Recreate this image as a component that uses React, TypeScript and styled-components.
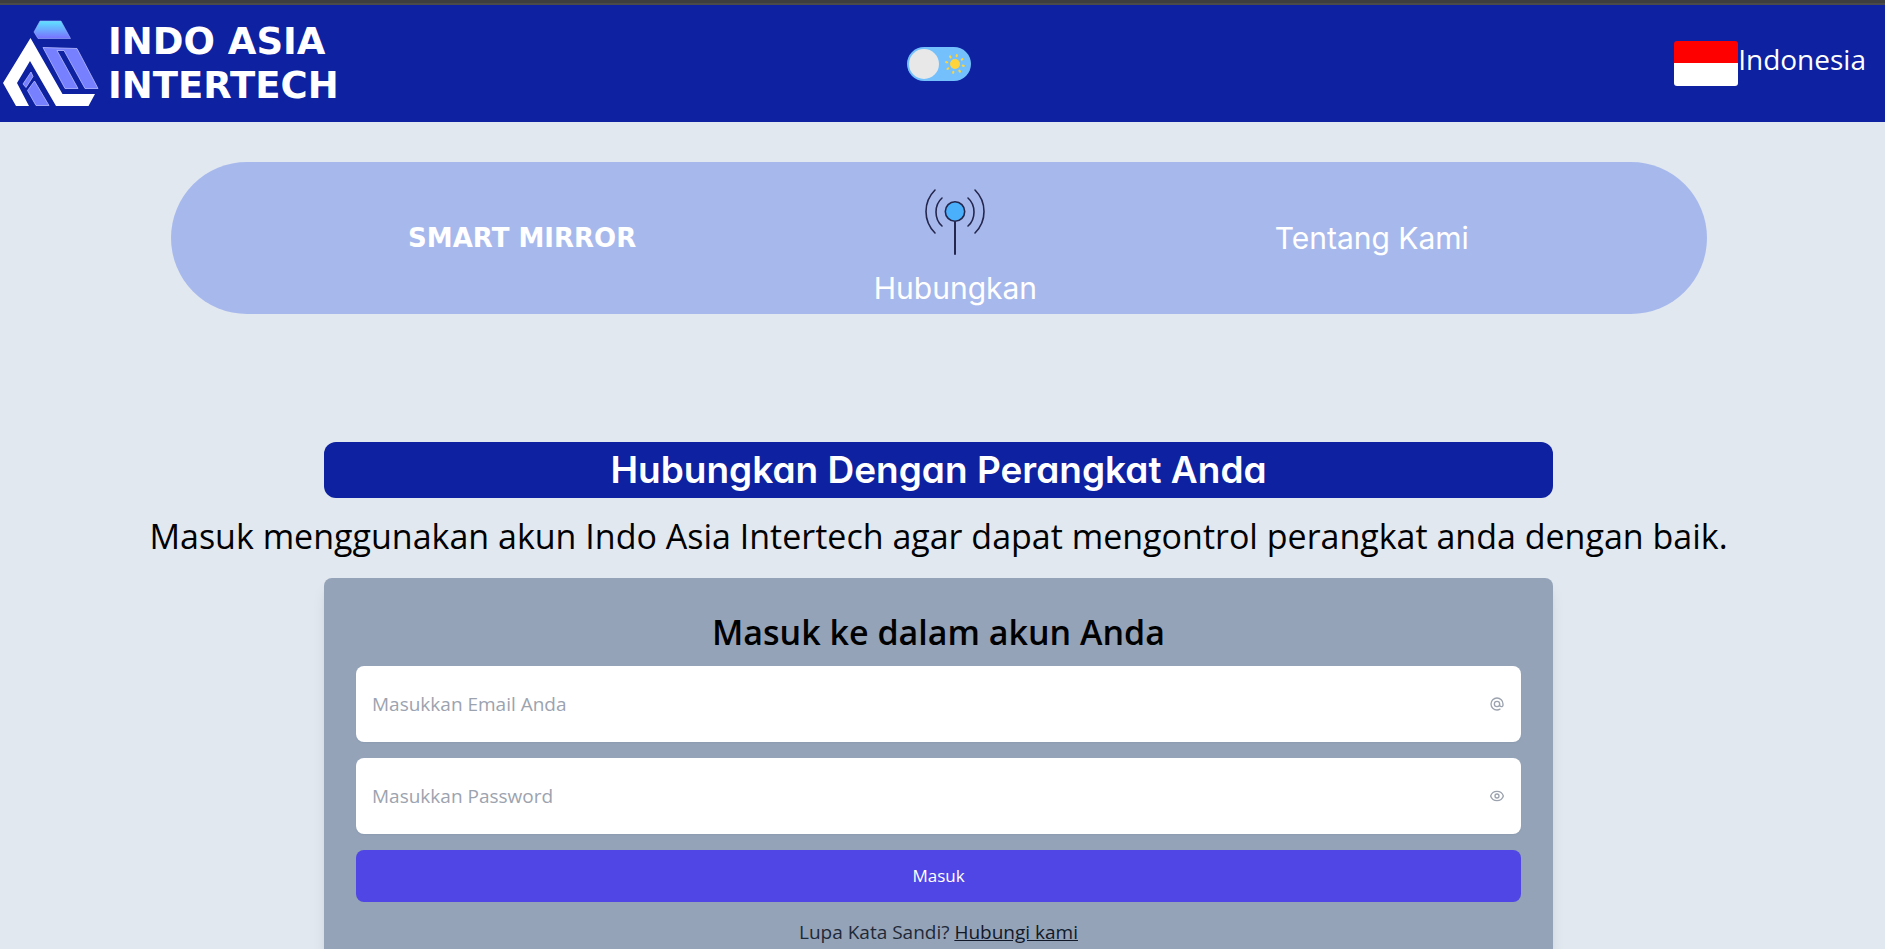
import React, { useState } from "react";
import styled, { createGlobalStyle } from "styled-components";

const ui = `"Open Sans", "Noto Sans", "Liberation Sans", sans-serif`;
const inter = `Inter, "Liberation Sans", sans-serif`;
const display = `"DejaVu Sans", "Liberation Sans", sans-serif`;
const navy = "#0d21a1";

const GlobalStyle = createGlobalStyle`
  *, *::before, *::after { box-sizing: border-box; }
  html { scrollbar-width: none; }
  body { margin: 0; background: #e2e8f0; color: #000; font-family: ${ui}; }
  h1, h2, p { margin: 0; }
`;

const Page = styled.div`
  min-height: 100vh;
  border-top: 3px solid #3e3e3e;
`;

const Header = styled.header`
  display: grid;
  grid-template-columns: 1fr auto 1fr;
  align-items: center;
  min-height: 119px;
  padding-right: 8px;
  border-top: 2px solid #4a4a4a;
  background: ${navy};
  color: #fff;
`;

const Brand = styled.a`
  display: flex;
  align-items: center;
  gap: 8px;
  color: inherit;
  text-decoration: none;
`;

const BrandName = styled.span`
  font: 700 37px/44px ${display};
`;

const Switch = styled.label`
  position: relative;
  display: flex;
  align-items: center;
  justify-content: flex-end;
  width: 64px;
  height: 34px;
  padding: 0 6px;
  border-radius: 17px;
  background: #73c0fc;
  cursor: pointer;
`;

const SwitchInput = styled.input`
  position: absolute;
  inset: 0;
  margin: 0;
  appearance: none;
  cursor: pointer;

  &::before {
    content: "";
    position: absolute;
    top: 2px;
    left: 2px;
    width: 30px;
    height: 30px;
    border-radius: 50%;
    background: #e8e8e8;
  }
  &:checked::before { left: 32px; }
`;

const Language = styled.button`
  display: flex;
  align-items: flex-start;
  justify-self: end;
  margin-right: 11px;
  padding: 0;
  border: 0;
  background: none;
  color: inherit;
  font: 400 28px/36px ${ui};
`;

const Flag = styled.span`
  width: 64px;
  height: 45px;
  border-radius: 3px;
  background: linear-gradient(#f00 50%, #fff 50%);
`;

const Main = styled.main`
  display: flex;
  flex-direction: column;
  align-items: center;
  padding: 40px 8px 40px 0;
`;

const Nav = styled.nav`
  display: flex;
  align-items: center;
  justify-content: space-evenly;
  width: 100%;
  max-width: 1536px;
  padding: 8px 0;
  border-radius: 76px;
  background: #a7b9ec;
`;

const NavLink = styled.a<{ $display?: boolean }>`
  display: flex;
  flex-direction: column;
  align-items: center;
  color: #fff;
  text-decoration: none;
  font: ${(p) => (p.$display ? `700 26px/36px ${display}` : `400 30px/36px ${inter}`)};
`;

const Title = styled.h1`
  width: 80%;
  max-width: 1229px;
  margin-top: 128px;
  border-radius: 12px;
  background: ${navy};
  color: #fff;
  font: 600 37px/56px ${inter};
  font-feature-settings: "cv11";
  text-align: center;
`;

const Lead = styled.p`
  margin: 16px 0 20px;
  font-size: 34px;
  line-height: 44px;
  text-align: center;
`;

const Card = styled.form`
  display: flex;
  flex-direction: column;
  gap: 16px;
  width: 80%;
  max-width: 1229px;
  padding: 32px;
  border-radius: 8px;
  background: #94a3b8;
  box-shadow: 0 10px 15px -3px rgba(0, 0, 0, 0.1), 0 4px 6px -4px rgba(0, 0, 0, 0.1);
`;

const CardTitle = styled.h2`
  margin-bottom: -4px;
  font-size: 34px;
  font-weight: 600;
  line-height: 44px;
  text-align: center;
`;

const Field = styled.label`
  display: flex;
  align-items: center;
  height: 76px;
  padding: 0 16px;
  border-radius: 8px;
  background: #fff;
  box-shadow: 0 1px 2px rgba(0, 0, 0, 0.05);
  color: #9ca3af;
`;

const Input = styled.input`
  flex: 1;
  min-width: 0;
  padding: 0;
  border: 0;
  outline: 0;
  background: none;
  color: #374151;
  font: 400 19px/28px ${ui};
  &::placeholder { color: #9ca3af; opacity: 1; }
`;

const Submit = styled.button`
  height: 52px;
  border: 0;
  border-radius: 8px;
  background: #4f46e5;
  color: #fff;
  font: 400 17px/28px ${ui};
`;

const Help = styled.p`
  color: #1f2937;
  font-size: 19px;
  line-height: 28px;
  text-align: center;
  a { color: #111827; }
`;

const Logo = () => (
  <svg width="100" height="90" viewBox="0 19 100 90" aria-hidden="true">
    <defs>
      <linearGradient id="cap" x1="0" y1="0" x2="0" y2="1">
        <stop offset="0" stopColor="#5fe3ff" />
        <stop offset="1" stopColor="#7a70ff" />
      </linearGradient>
    </defs>
    <path d="M40 21H61L70.500 38.500H38L34 32Z" fill="url(#cap)" stroke="#9fb4ff" strokeWidth=".6" />
    <path d="M30.500 38L62.500 94H95L88.500 106H56L30 61L17 83L29 106H16L3 83Z" fill="#fff" />
    <g fill="#7780ff" stroke="#b9bdff" strokeWidth=".8">
      <path d="M43 47.500L77 48.500L98 88.500H85L64 50.500H57L78 88.500H65Z" />
      <path d="M31 72L33 76.500L26 87.500L23 84Z" />
      <path d="M34.500 81L49 105.500H36L27.500 90.500Z" />
    </g>
  </svg>
);

const Sun = () => (
  <svg width="20" height="22" viewBox="-10 -11 20 22" aria-hidden="true" fill="#ffd43b">
    <circle r="5" />
    {[12, 57, 102, 147, 192, 237, 282, 327].map((a) => (
      <ellipse key={a} cy="-8.500" rx="1.100" ry="1.600" transform={`rotate(${a})`} />
    ))}
  </svg>
);

const Antenna = () => (
  <svg width="100" height="100" viewBox="0 0 100 100" fill="none" stroke="#24264d" strokeWidth="1.600" strokeLinecap="round" aria-hidden="true">
    <path d="M50 52V84" strokeWidth="2" />
    <circle cx="50" cy="41.500" r="9.700" fill="#4bb0fb" />
    <path d="M37 28C29 35 29 49 37 56M63 28C71 35 71 49 63 56" />
    <path d="M30 20C18 32 18 51 30 63M70 20C82 32 82 51 70 63" />
  </svg>
);

const FieldIcon = ({ paths }: { paths: string[] }) => (
  <svg width="16" height="16" viewBox="0 0 24 24" fill="none" stroke="currentColor" strokeWidth="2" strokeLinecap="round" strokeLinejoin="round" aria-hidden="true">
    {paths.map((d) => <path key={d} d={d} />)}
  </svg>
);

const atPaths = [
  "M16 12a4 4 0 10-8 0 4 4 0 008 0zm0 0v1.500a2.500 2.500 0 005 0V12a9 9 0 10-9 9m4.500-1.206a8.959 8.959 0 01-4.500 1.207",
];
const eyePaths = [
  "M15 12a3 3 0 11-6 0 3 3 0 016 0z",
  "M2.458 12C3.732 7.943 7.523 5 12 5c4.478 0 8.268 2.943 9.542 7-1.274 4.057-5.064 7-9.542 7-4.477 0-8.268-2.943-9.542-7z",
];

export default function App() {
  const [dark, setDark] = useState(false);
  return (
    <Page>
      <GlobalStyle />
      <Header>
        <Brand href="#">
          <Logo />
          <BrandName>INDO ASIA<br />INTERTECH</BrandName>
        </Brand>
        <Switch>
          <Sun />
          <SwitchInput type="checkbox" aria-label="Mode gelap" checked={dark} onChange={(e) => setDark(e.target.checked)} />
        </Switch>
        <Language type="button"><Flag />Indonesia</Language>
      </Header>
      <Main>
        <Nav>
          <NavLink href="#mirror" $display>SMART MIRROR</NavLink>
          <NavLink href="#connect"><Antenna />Hubungkan</NavLink>
          <NavLink href="#about">Tentang Kami</NavLink>
        </Nav>
        <Title>Hubungkan Dengan Perangkat Anda</Title>
        <Lead>Masuk menggunakan akun Indo Asia Intertech agar dapat mengontrol perangkat anda dengan baik.</Lead>
        <Card onSubmit={(e) => e.preventDefault()}>
          <CardTitle>Masuk ke dalam akun Anda</CardTitle>
          <Field>
            <Input type="email" aria-label="Email" placeholder="Masukkan Email Anda" />
            <FieldIcon paths={atPaths} />
          </Field>
          <Field>
            <Input type="password" aria-label="Password" placeholder="Masukkan Password" />
            <FieldIcon paths={eyePaths} />
          </Field>
          <Submit type="submit">Masuk</Submit>
          <Help>Lupa Kata Sandi? <a href="#contact">Hubungi kami</a></Help>
        </Card>
      </Main>
    </Page>
  );
}
